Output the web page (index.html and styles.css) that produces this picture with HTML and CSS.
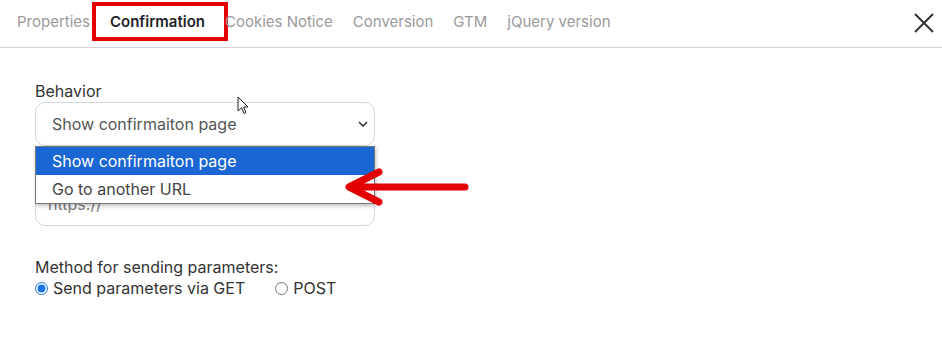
FILE: index.html
```html
<!DOCTYPE html>
<html>
<head>
<meta name="viewport" content="width=device-width, initial-scale=1">
<title>Confirmation</title>
<link rel="stylesheet" href="styles.css">
</head>
<body>

<div class="header">
  <div class="tabs">
    <span class="tab">Properties</span>
    <span class="tab active">Confirmation</span>
    <span class="tab">Cookies Notice</span>
    <span class="tab">Conversion</span>
    <span class="tab">GTM</span>
    <span class="tab">jQuery version</span>
  </div>
  <svg class="close" width="20" height="20" viewBox="0 0 20 20">
    <path d="M1 1 L19 19 M19 1 L1 19" stroke="#333" stroke-width="2" fill="none"/>
  </svg>
</div>

<div class="content">
  <label class="label">Behavior</label>
  <div class="select-wrap">
    <select class="field select">
      <option>Show confirmaiton page</option>
      <option>Go to another URL</option>
    </select>
    <svg class="chevron" width="10" height="6" viewBox="0 0 10 6">
      <path d="M1 1 L5 5 L9 1" stroke="#333" stroke-width="1.6" fill="none"/>
    </svg>
    <div class="dropdown">
      <div class="option selected">Show confirmaiton page</div>
      <div class="option">Go to another URL</div>
    </div>
  </div>

  <input type="text" class="field url" placeholder="https://">

  <div class="label method">Method for sending parameters:</div>
  <div class="radios">
    <label class="radio"><input type="radio" name="m" checked> Send parameters via GET</label>
    <label class="radio"><input type="radio" name="m"> POST</label>
  </div>

  <!-- annotation arrow -->
  <svg class="arrow" width="130" height="40" viewBox="0 0 130 40">
    <path d="M120 19 L6 19 M34 4 L4 19 L34 34" stroke="#e30000" stroke-width="7" stroke-linecap="round" stroke-linejoin="round" fill="none"/>
  </svg>

  <!-- mouse pointer -->
  <svg class="pointer" width="14" height="20" viewBox="0 0 14 20">
    <path d="M1 1 L1 15 L4.5 11.8 L7 17.5 L9 16.6 L6.6 11 L11 11 Z" fill="#fff" stroke="#222" stroke-width="1"/>
  </svg>
</div>

</body>
</html>
```

FILE: styles.css
```css
body {
  margin: 0;
  font-family: Inter, "Noto Sans", sans-serif;
  font-size: 16px;
  color: #333;
  background: #fff;
}

.header {
  height: 47px;
  border-bottom: 1px solid #d4d4d4;
  display: flex;
  align-items: center;
  justify-content: space-between;
  padding: 0 8px 0 17px;
}

.tabs {
  display: flex;
  gap: 20px;
  margin-top: -3px;
  font-size: 15px;
}

.tab {
  color: #9a9a9a;
  line-height: 20px;
  position: relative;
}

.tab.active {
  color: #1f2329;
  font-weight: 600;
}

.tab.active::after {
  content: "";
  position: absolute;
  left: -18px;
  top: -10px;
  width: 128px;
  height: 31px;
  border: 4px solid #e30000;
}

.close {
  margin-top: -2px;
}

.content {
  position: relative;
  padding: 33px 0 0 35px;
}

.label {
  display: block;
  line-height: 20px;
  margin-bottom: 1px;
  color: #333;
}

.select-wrap {
  position: relative;
  width: 340px;
}

.field {
  box-sizing: border-box;
  width: 340px;
  height: 44px;
  border: 1px solid #cfdae5;
  border-radius: 10px;
  font-family: Inter, "Noto Sans", sans-serif;
  font-size: 16px;
  background: #fff;
}

.select {
  appearance: none;
  -webkit-appearance: none;
  padding: 0 16px;
  color: #555;
  display: block;
}

.chevron {
  position: absolute;
  right: 7px;
  top: 19px;
}

.dropdown {
  position: absolute;
  left: 0;
  top: 44px;
  width: 340px;
  box-sizing: border-box;
  border: 1px solid #767676;
  background: #fff;
  box-shadow: 1px 2px 4px rgba(0,0,0,0.25);
  z-index: 2;
}

.option {
  height: 28px;
  line-height: 28px;
  padding-left: 16px;
  color: #444;
}

.option.selected {
  background: #1a66d2;
  color: #fff;
}

.url {
  display: block;
  margin-top: 36px;
  padding: 0 12px;
  color: #777;
}

.url::placeholder {
  color: #7a7a7a;
}

.method {
  margin-top: 31px;
  margin-bottom: 1px;
}

.radios {
  display: flex;
  gap: 30px;
  line-height: 20px;
}

.radio {
  display: flex;
  align-items: center;
  gap: 5px;
  color: #333;
}

.radio input {
  margin: 0;
  width: 13px;
  height: 13px;
  accent-color: #1a73e8;
}

.arrow {
  position: absolute;
  left: 345px;
  top: 120px;
  z-index: 3;
}

.pointer {
  position: absolute;
  left: 237px;
  top: 48px;
}
```
